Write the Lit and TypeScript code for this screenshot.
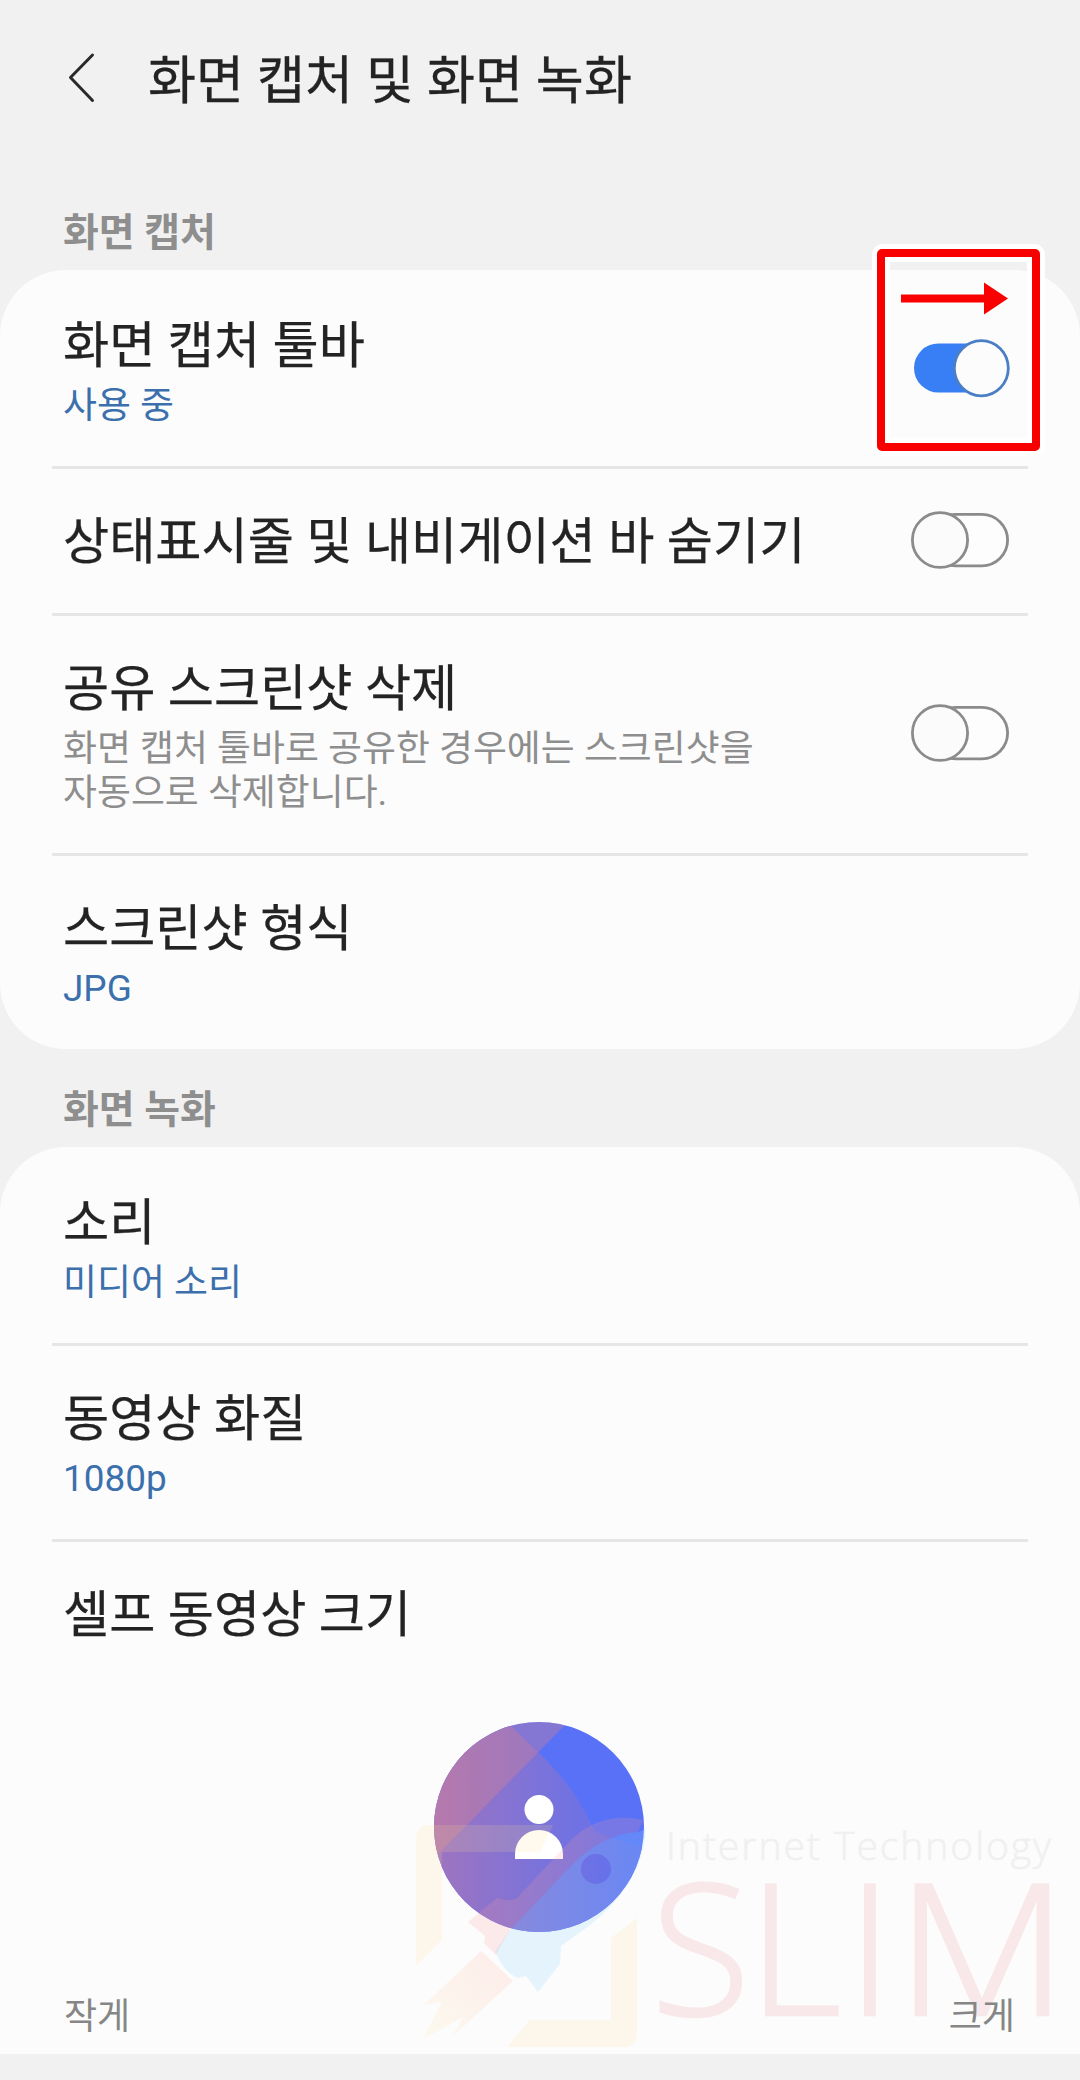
import { LitElement, html, svg, css, nothing } from "lit";
import { customElement, property } from "lit/decorators.js";

interface Setting {
  title: string;
  value?: string;
  note?: string[];
  toggle?: "on" | "off";
  marked?: boolean;
}

const CAPTURE: Setting[] = [
  { title: "화면 캡처 툴바", value: "사용 중", toggle: "on", marked: true },
  { title: "상태표시줄 및 내비게이션 바 숨기기", toggle: "off" },
  {
    title: "공유 스크린샷 삭제",
    note: ["화면 캡처 툴바로 공유한 경우에는 스크린샷을", "자동으로 삭제합니다."],
    toggle: "off",
  },
  { title: "스크린샷 형식", value: "JPG" },
];

const RECORD: Setting[] = [
  { title: "소리", value: "미디어 소리" },
  { title: "동영상 화질", value: "1080p" },
];

@customElement("toggle-switch")
class ToggleSwitch extends LitElement {
  @property({ type: Boolean }) on = false;

  static styles = css`
    :host { display: block; width: 100px; height: 60px; }
    .switch { display: block; }
  `;

  render() {
    return html`<svg class="switch" width="100" height="60" viewBox="0 0 100 60">
      ${this.on
        ? svg`<rect x="4" y="5.5" width="92" height="49" rx="24.5" fill="#387ff5"/>
            <ellipse cx="71.3" cy="30.2" rx="27" ry="27.6" fill="#fcfcfc" stroke="#4a7fc6" stroke-width="2.8"/>`
        : svg`<rect x="20" y="4.4" width="77.6" height="51.4" rx="25.7" fill="#fdfdfd" stroke="#8b8b8b" stroke-width="2.8"/>
            <ellipse cx="30" cy="30" rx="27.6" ry="27.4" fill="#fbfbfb" stroke="#8b8b8b" stroke-width="2.8"/>`}
    </svg>`;
  }
}

@customElement("setting-row")
class SettingRow extends LitElement {
  @property({ attribute: false }) item!: Setting;

  static styles = css`
    :host { display: block; }
    .row { display: flex; justify-content: space-between; box-sizing: border-box; min-height: 147px; padding: 46px 18px 38px 11px; }
    .title { font-size: 50.200px; line-height: 60px; color: #232323; white-space: nowrap; -webkit-text-stroke: 0.25px #232323; }
    .value, .note { margin-top: 8px; font-size: 36.900px; line-height: 44px; white-space: nowrap; }
    .value { color: #3b70ad; }
    .note { color: #8e8e8e; }
    .control { position: relative; align-self: center; margin: -20px 0 -12px; }
    .mark { position: absolute; left: -39px; top: -95px; }
  `;

  render() {
    const s = this.item;
    return html`<div class="row">
      <div>
        <div class="title">${s.title}</div>
        ${s.value ? html`<div class="value">${s.value}</div>` : nothing}
        ${s.note ? html`<div class="note">${s.note.map((l) => html`<div>${l}</div>`)}</div>` : nothing}
      </div>
      ${s.toggle
        ? html`<div class="control">
            <toggle-switch ?on=${s.toggle === "on"}></toggle-switch>
            ${s.marked
              ? html`<svg class="mark" width="176" height="216" viewBox="0 0 176 216">
                  <rect x="10" y="10" width="155" height="194" rx="2" fill="none" stroke="#fff" stroke-width="18"/>
                  <rect x="10" y="10" width="155" height="194" rx="1" fill="none" stroke="#f80000" stroke-width="8" stroke-linejoin="round"/>
                  <path d="M30 51.500h83v-12l24 16-24 16v-12H30z" fill="#fa0000"/>
                </svg>`
              : nothing}
          </div>`
        : nothing}
    </div>`;
  }
}

@customElement("profile-preview")
class ProfilePreview extends LitElement {
  static styles = css`
    :host { display: block; width: 210px; height: 210px; }
    .face { display: block; }
  `;

  render() {
    return html`<svg class="face" width="210" height="210" viewBox="434 1722 210 210">
      <defs>
        <clipPath id="disc"><circle cx="539" cy="1827" r="105"/></clipPath>
        <linearGradient id="fade" gradientUnits="userSpaceOnUse" x1="434" x2="644" y1="0" y2="0">
          <stop offset="0" stop-color="#9f74bf"/><stop offset=".5" stop-color="#7b73da"/><stop offset="1" stop-color="#5d70f2"/>
        </linearGradient>
      </defs>
      <g clip-path="url(#disc)">
        <rect x="434" y="1722" width="210" height="210" fill="#5871f7"/>
        <path d="M430 1710H494L539 1753C562 1775 580 1798 595 1832L648 1850V1940H430z" fill="url(#fade)"/>
        <path d="M430 1715H575L430 1862z" fill="#e98383" fill-opacity=".31"/>
      </g>
      <circle cx="539" cy="1809.500" r="14.500" fill="#fff"/>
      <path d="M515 1859v-5a24 24 0 0 1 48 0v5z" fill="#fff"/>
    </svg>`;
  }
}

@customElement("site-mark")
class SiteMark extends LitElement {
  static styles = css`
    :host { display: block; }
    .art { display: block; overflow: visible; }
    .tag { font-family: "Open Sans", sans-serif; font-weight: 300; font-size: 39px; fill: #f0f0f1; stroke: #f0f0f1; stroke-width: 0.6px; }
    .name { font-family: "Open Sans", sans-serif; font-weight: 300; font-size: 182px; fill: #f9e8e9; stroke: #f9e8e9; stroke-width: 2.600px; }
  `;

  render() {
    return html`<svg class="art" width="680" height="264" viewBox="400 1790 680 264">
      <defs>
        <linearGradient id="flame" gradientUnits="userSpaceOnUse" x1="500" y1="1960" x2="430" y2="2035">
          <stop offset="0" stop-color="#fdedea"/><stop offset="1" stop-color="#fcf9ee"/>
        </linearGradient>
      </defs>
      <g fill="#fce08d" fill-opacity=".16">
        <path d="M430 1825H553L540 1852H442V1940L416 1966V1839Q416 1825 430 1825z"/>
        <path d="M637 1918V2033Q637 2047 623 2047H507L530 2020H611V1938z"/>
      </g>
      <path d="M481 1951L513 1981L452 2037L463 2017L422 2040L442 2002L424 2005z" fill="url(#flame)"/>
      <path d="M643 1820C610 1813 588 1824 570 1841L517 1898Q510 1902 497 1898L468 1922L485 1936L484 1943L496 1955L510 1930L568 1869Q600 1834 638 1832z" fill="#ff9b9b" fill-opacity=".19"/>
      <path fill-rule="evenodd" d="M638 1832Q600 1834 568 1869L510 1930L495 1951Q503 1972 518 1978L526 1976L538 1992L560 1964L561 1946L582 1931Q642 1888 646 1829zM611 1869a15 15 0 1 0-30 0a15 15 0 1 0 30 0z" fill="#96dcff" fill-opacity=".22"/>
      <text class="tag" x="666" y="1860" textLength="385">Internet Technology</text>
      <text class="name" y="2015"><tspan x="651">S</tspan><tspan x="748">L</tspan><tspan x="847">I</tspan><tspan x="896" textLength="172" lengthAdjust="spacingAndGlyphs">M</tspan></text>
    </svg>`;
  }
}

@customElement("app-root")
class AppRoot extends LitElement {
  static styles = css`
    :host {
      display: block; width: 1080px; height: 2080px; overflow: hidden; background: #f1f1f1;
      font-family: Roboto, "Noto Sans CJK KR", sans-serif;
    }
    .bar { display: flex; align-items: center; height: 160px; box-sizing: border-box; padding-left: 65px; }
    .back { display: block; width: 32px; margin: -3px 51px 0 0; }
    .heading { margin: 3px 0 0; font-size: 52.200px; line-height: 62px; font-weight: 400; color: #232323; white-space: nowrap; -webkit-text-stroke: 0.3px #232323; }
    .label { padding-left: 63px; font-size: 38.900px; line-height: 46px; font-weight: 700; color: #8e8e8e; }
    .first { padding-top: 50px; height: 60px; }
    .second { padding-top: 38px; height: 60px; }
    .card { position: relative; background: #fcfcfc; border-radius: 66px; padding: 0 52px; }
    .open { border-radius: 66px 66px 0 0; height: 907px; }
    .line { position: relative; box-sizing: border-box; }
    .line + .line::before { content: ""; position: absolute; left: 0; right: 0; top: 0; height: 3px; background: #e6e6e6; }
    .preview { display: flex; justify-content: center; padding: 36px 2px 0 0; }
    .range { position: relative; z-index: 3; display: flex; justify-content: space-between; padding: 63px 13px 0 12px; font-size: 36px; line-height: 44px; color: #868686; }
    .stamp { position: absolute; right: 0; bottom: 0; z-index: 2; }
  `;

  render() {
    return html`
      <header class="bar">
        <svg class="back" width="32" height="56" viewBox="0 0 32 56">
          <path d="M27.500 4L5.500 26.500L27.500 49.500" fill="none" stroke="#2a2a2a" stroke-width="3" stroke-linecap="round" stroke-linejoin="round"/>
        </svg>
        <h1 class="heading">화면 캡처 및 화면 녹화</h1>
      </header>
      <div class="label first">화면 캡처</div>
      <section class="card">
        ${CAPTURE.map((i) => html`<setting-row class="line" .item=${i}></setting-row>`)}
      </section>
      <div class="label second">화면 녹화</div>
      <section class="card open">
        ${RECORD.map((i) => html`<setting-row class="line" .item=${i}></setting-row>`)}
        <div class="line">
          <setting-row .item=${{ title: "셀프 동영상 크기" }}></setting-row>
          <div class="preview"><profile-preview></profile-preview></div>
          <div class="range"><span>작게</span><span>크게</span></div>
        </div>
        <site-mark class="stamp"></site-mark>
      </section>
    `;
  }
}
